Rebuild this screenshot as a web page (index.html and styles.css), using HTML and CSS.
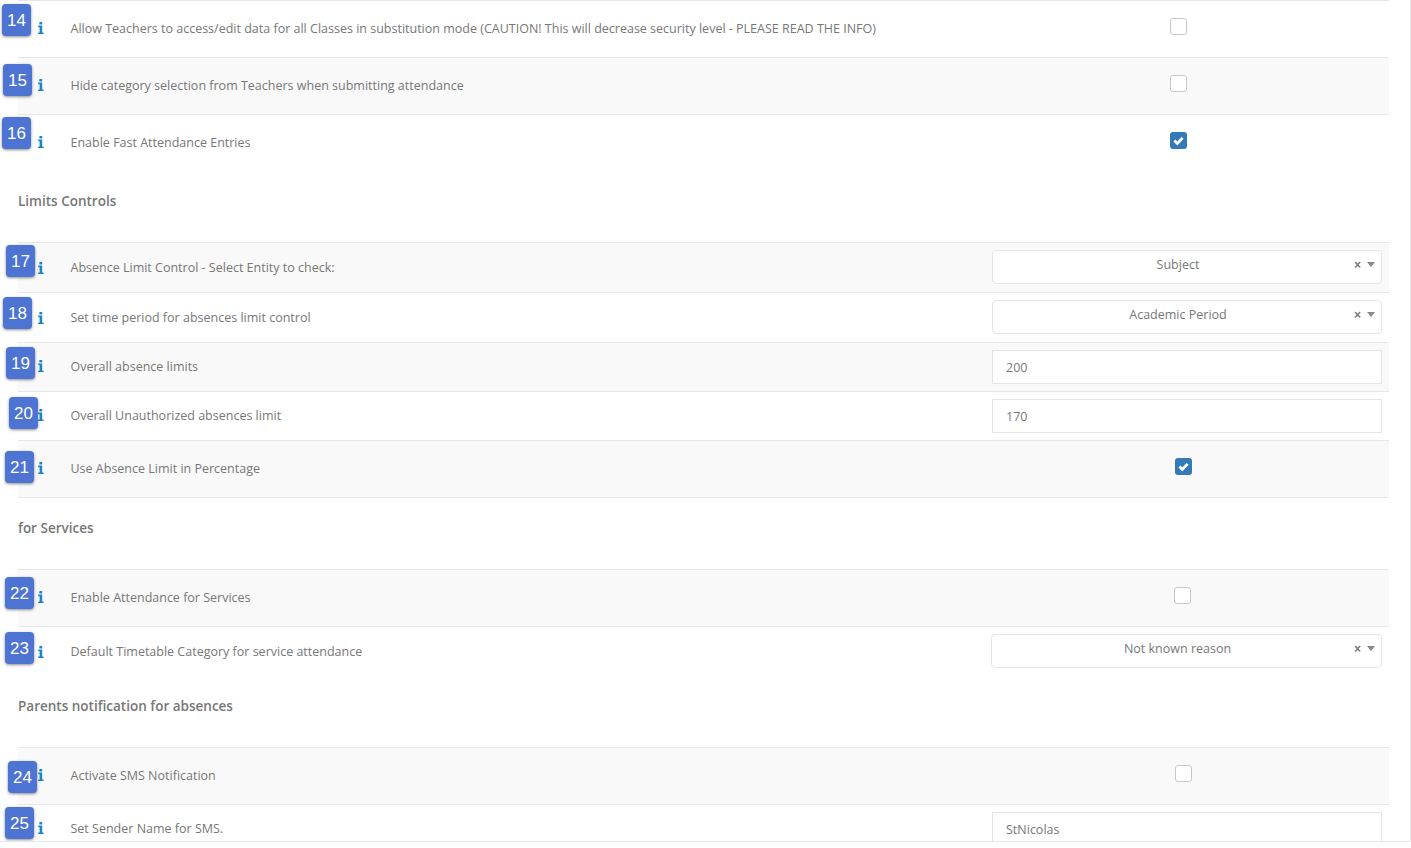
FILE: index.html
```html
<!DOCTYPE html>
<html lang="en">
<head>
<meta charset="utf-8">
<title>Attendance settings</title>
<link rel="stylesheet" href="styles.css">
</head>
<body>
<svg class="defs" width="0" height="0" aria-hidden="true">
  <symbol id="info" viewBox="0 0 6 12">
    <path d="M1.4 0h2.8v2.4H1.4zM0.2 3.6h4v6.8h1.4V12H0.2v-1.6h1.4V5.2H0.2z"/>
  </symbol>
</svg>
<main class="frame">
  <div class="row h57 first">
    <span class="badge b14">14</span>
    <svg class="info"><use href="#info"/></svg>
    <span class="label">Allow Teachers to access/edit data for all Classes in substitution mode (CAUTION! This will decrease security level - PLEASE READ THE INFO)</span>
    <div class="cell c422"><span class="check"></span></div>
  </div>
  <div class="row h57 alt">
    <span class="badge b15">15</span>
    <svg class="info"><use href="#info"/></svg>
    <span class="label">Hide category selection from Teachers when submitting attendance</span>
    <div class="cell c422"><span class="check"></span></div>
  </div>
  <div class="row h57">
    <span class="badge b16">16</span>
    <svg class="info"><use href="#info"/></svg>
    <span class="label">Enable Fast Attendance Entries</span>
    <div class="cell c422"><span class="check on"><svg viewBox="0 0 17 17"><path d="M4.4 8.6l2.9 2.8 5.3-5.5" /></svg></span></div>
  </div>
  <h3 class="section">Limits Controls</h3>
  <div class="row h50 alt">
    <span class="badge b17">17</span>
    <svg class="info"><use href="#info"/></svg>
    <span class="label">Absence Limit Control - Select Entity to check:</span>
    <div class="field">
      <div class="select"><span class="value">Subject</span><span class="clear">×</span><span class="arrow"></span></div>
    </div>
  </div>
  <div class="row h50">
    <span class="badge b18">18</span>
    <svg class="info"><use href="#info"/></svg>
    <span class="label">Set time period for absences limit control</span>
    <div class="field">
      <div class="select"><span class="value">Academic Period</span><span class="clear">×</span><span class="arrow"></span></div>
    </div>
  </div>
  <div class="row h49 alt">
    <span class="badge b19">19</span>
    <svg class="info"><use href="#info"/></svg>
    <span class="label">Overall absence limits</span>
    <div class="field"><div class="input">200</div></div>
  </div>
  <div class="row h49">
    <span class="badge b20">20</span>
    <svg class="info"><use href="#info"/></svg>
    <span class="label">Overall Unauthorized absences limit</span>
    <div class="field"><div class="input">170</div></div>
  </div>
  <div class="row h57 alt">
    <span class="badge b21">21</span>
    <svg class="info"><use href="#info"/></svg>
    <span class="label">Use Absence Limit in Percentage</span>
    <div class="cell c412"><span class="check on"><svg viewBox="0 0 17 17"><path d="M4.4 8.6l2.9 2.8 5.3-5.5" /></svg></span></div>
  </div>
  <h3 class="section ruled">for Services</h3>
  <div class="row h57 alt">
    <span class="badge b22">22</span>
    <svg class="info"><use href="#info"/></svg>
    <span class="label">Enable Attendance for Services</span>
    <div class="cell c414"><span class="check"></span></div>
  </div>
  <div class="row h50">
    <span class="badge b23">23</span>
    <svg class="info"><use href="#info"/></svg>
    <span class="label">Default Timetable Category for service attendance</span>
    <div class="field wide">
      <div class="select"><span class="value">Not known reason</span><span class="clear">×</span><span class="arrow"></span></div>
    </div>
  </div>
  <h3 class="section">Parents notification for absences</h3>
  <div class="row h57 alt">
    <span class="badge b24">24</span>
    <svg class="info"><use href="#info"/></svg>
    <span class="label">Activate SMS Notification</span>
    <div class="cell c412"><span class="check"></span></div>
  </div>
  <div class="row h49">
    <span class="badge b25">25</span>
    <svg class="info"><use href="#info"/></svg>
    <span class="label">Set Sender Name for SMS.</span>
    <div class="field"><div class="input">StNicolas</div></div>
  </div>
</main>
</body>
</html>
```
FILE: styles.css
```css
html, body {
  margin: 0;
  padding: 0;
  background: #fff;
  overflow: hidden;
}
body {
  height: 848px;
  font-family: "Open Sans", "Liberation Sans", sans-serif;
  font-size: 12.5px;
  color: #777;
}
.defs { position: absolute; }
.frame {
  position: relative;
  box-sizing: content-box;
  width: 1392px;
  height: 841px;
  padding-left: 18px;
  overflow: hidden;
  border-right: 1px solid #e6e6e6;
  border-bottom: 1px solid #e6e6e6;
}
.row {
  box-sizing: border-box;
  width: 1371px;
  display: flex;
  align-items: center;
  padding-bottom: 2px;
  border-top: 1px solid #e7e7e7;
}
.h57 { height: 57px; }
.h50 { height: 50px; padding-bottom: 0; }
.h49 { height: 49px; }
.alt { background: #f9f9f9; }
.info {
  width: 6px;
  height: 12px;
  margin-left: 20px;
  flex: none;
  fill: #1a86c8;
}
.label {
  margin-left: 26.5px;
  flex: 1;
  white-space: nowrap;
}
.cell {
  flex: none;
  display: flex;
  justify-content: center;
  margin-top: -4px;
}
.c422 { width: 422px; }
.c412 { width: 412px; }
.c414 { width: 414px; }
.check {
  box-sizing: border-box;
  width: 17px;
  height: 17px;
  border: 1px solid #c8c8c8;
  border-radius: 3px;
  background: #fff;
  display: block;
}
.check.on {
  border: 0;
  background: #337ab7;
}
.check svg {
  display: block;
  width: 17px;
  height: 17px;
  fill: none;
  stroke: #fff;
  stroke-width: 2.8;
}
.field {
  flex: none;
  box-sizing: border-box;
  width: 397px;
  padding-right: 7px;
}
.field.wide { width: 398px; }
.select, .input {
  box-sizing: border-box;
  height: 34px;
  border: 1px solid #e5e5e5;
  background: #fff;
  display: flex;
  align-items: center;
}
.select {
  border-radius: 4px;
  margin-bottom: 2px;
}
.input {
  margin-top: 2px;
  padding-left: 13px;
}
.value {
  flex: 1;
  text-align: center;
  position: relative;
  top: -2px;
  margin-right: -9px;
}
.clear {
  font-family: "Liberation Sans", sans-serif;
  font-weight: 700;
  font-size: 12px;
  color: #777;
  position: relative;
  top: -2px;
  margin-right: 6px;
}
.arrow {
  width: 0;
  height: 0;
  border-left: 4px solid transparent;
  border-right: 4px solid transparent;
  border-top: 5px solid #888;
  margin-right: 6px;
  position: relative;
  top: -2px;
}
.section {
  box-sizing: content-box;
  margin: 0;
  height: 60px;
  padding-bottom: 11px;
  width: 1371px;
  font-size: 13.5px;
  font-weight: 600;
  line-height: 60px;
  color: #777;
}
.section.ruled { border-top: 1px solid #e7e7e7; }
.badge {
  position: absolute;
  box-sizing: border-box;
  width: 29px;
  height: 32px;
  background: #4d74d2;
  border-radius: 4px;
  box-shadow: 0 1px 3px rgba(0, 0, 0, .45);
  color: #fff;
  font-family: "Liberation Sans", sans-serif;
  font-size: 17px;
  line-height: 33px;
  text-align: center;
}
.b14 { left: 2px; top: 4px; }
.b15 { left: 3px; top: 64px; }
.b16 { left: 2px; top: 117px; }
.b17 { left: 6px; top: 245px; }
.b18 { left: 3px; top: 297px; }
.b19 { left: 6px; top: 347px; }
.b20 { left: 9px; top: 397px; }
.b21 { left: 5px; top: 451px; }
.b22 { left: 5px; top: 577px; }
.b23 { left: 5px; top: 632px; }
.b24 { left: 8px; top: 761px; }
.b25 { left: 5px; top: 807px; }
```
